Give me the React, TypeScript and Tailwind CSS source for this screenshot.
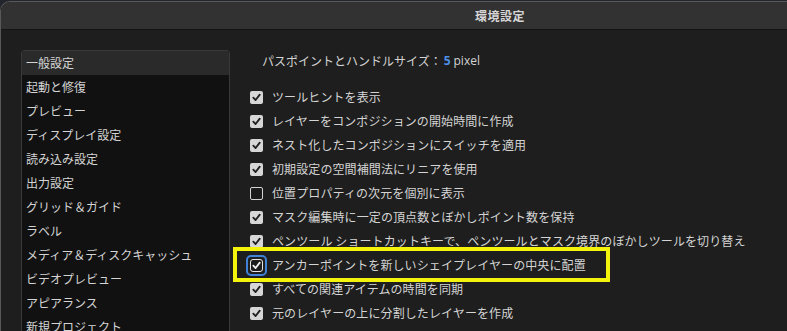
import React from 'react';

const FONT = { fontFamily: '"Noto Sans CJK JP", "Noto Sans", sans-serif' };

const sections = [
  '一般設定',
  '起動と修復',
  'プレビュー',
  'ディスプレイ設定',
  '読み込み設定',
  '出力設定',
  'グリッド＆ガイド',
  'ラベル',
  'メディア＆ディスクキャッシュ',
  'ビデオプレビュー',
  'アピアランス',
  '新規プロジェクト',
];

const options = [
  { label: 'ツールヒントを表示', checked: true },
  { label: 'レイヤーをコンポジションの開始時間に作成', checked: true },
  { label: 'ネスト化したコンポジションにスイッチを適用', checked: true },
  { label: '初期設定の空間補間法にリニアを使用', checked: true },
  { label: '位置プロパティの次元を個別に表示', checked: false },
  { label: 'マスク編集時に一定の頂点数とぼかしポイント数を保持', checked: true },
  { label: 'ペンツール ショートカットキーで、ペンツールとマスク境界のぼかしツールを切り替え', checked: true },
  { label: 'アンカーポイントを新しいシェイプレイヤーの中央に配置', checked: true, focused: true },
  { label: 'すべての関連アイテムの時間を同期', checked: true },
  { label: '元のレイヤーの上に分割したレイヤーを作成', checked: true },
];

function Check({ color }: { color: string }) {
  return (
    <svg width="9" height="9" viewBox="0 0 10 10" fill="none">
      <path d="M1.5 5.2 L4 7.8 L8.6 1.8" stroke={color} strokeWidth="2" strokeLinecap="round" strokeLinejoin="round" />
    </svg>
  );
}

function Checkbox({ checked, focused }: { checked: boolean; focused?: boolean }) {
  if (focused) {
    return (
      <div className="w-[13px] h-[13px] flex items-center justify-center relative">
        <div className="absolute -inset-[4px] rounded-[5px] border-[2.5px] border-[#3f82d8]" />
        <div className="w-[13px] h-[13px] rounded-[3px] border-[1.5px] border-[#e6e6e6] bg-[#1c1c1c] flex items-center justify-center">
          <Check color="#f0f0f0" />
        </div>
      </div>
    );
  }
  if (!checked) {
    return <div className="w-[13px] h-[13px] rounded-[2px] border-[1.5px] border-[#d4d4d4] bg-[#1c1c1c]" />;
  }
  return (
    <div className="w-[13px] h-[13px] rounded-[2px] bg-[#d6d6d6] flex items-center justify-center">
      <Check color="#1e1e1e" />
    </div>
  );
}

export default function App() {
  return (
    <div className="w-[787px] h-[331px] overflow-hidden bg-[#23252c] pt-[1px]" style={FONT}>
      <div className="h-[330px] flex flex-col bg-[#1e1e1e] border-l border-t border-[#585858] rounded-tl-[10px] overflow-hidden">
        {/* title bar */}
        <div className="h-[28px] shrink-0 bg-[#323232] border-b border-[#141414] flex items-center pl-[474px]">
          <span className="text-[12px] font-bold text-[#d6d6d6] tracking-[0.5px]">環境設定</span>
        </div>

        <div className="flex flex-1 min-h-0">
          {/* section list */}
          <div className="ml-[20px] mt-[20px] w-[209px] shrink-0 bg-[#111111] border border-[#393939] border-b-0 rounded-t-[4px] text-[12px] text-[#d4d4d4]">
            {sections.map((s, i) => (
              <div
                key={s}
                className={`h-[24px] flex items-center pl-[4px] ${i === 0 ? 'bg-[#2a2a2a]' : ''}`}
              >
                {s}
              </div>
            ))}
          </div>

          {/* general settings */}
          <div className="flex-1 pl-[20px] pt-[19px] text-[12px] text-[#d4d4d4]">
            <div className="h-[24px] flex items-center pl-[12px]">
              <span>パスポイントとハンドルサイズ：</span>
              <span className="ml-[2px] text-[#4d8fe4] font-bold" style={{ fontFamily: '"Open Sans", sans-serif' }}>5</span>
              <span className="ml-[3px]" style={{ fontFamily: '"Open Sans", sans-serif' }}>pixel</span>
            </div>
            <div className="mt-[12px] flex flex-col">
              {options.map((o) => (
                <div key={o.label} className="relative h-[24px] flex items-center whitespace-nowrap">
                  {o.focused && (
                    <div className="absolute -left-[17px] -top-[6px] w-[377px] h-[35px] border-[4px] border-[#f3f30c]" />
                  )}
                  <Checkbox checked={o.checked} focused={o.focused} />
                  <span className="ml-[9px] tracking-[0.1px]">{o.label}</span>
                </div>
              ))}
            </div>
          </div>
        </div>
      </div>
    </div>
  );
}
